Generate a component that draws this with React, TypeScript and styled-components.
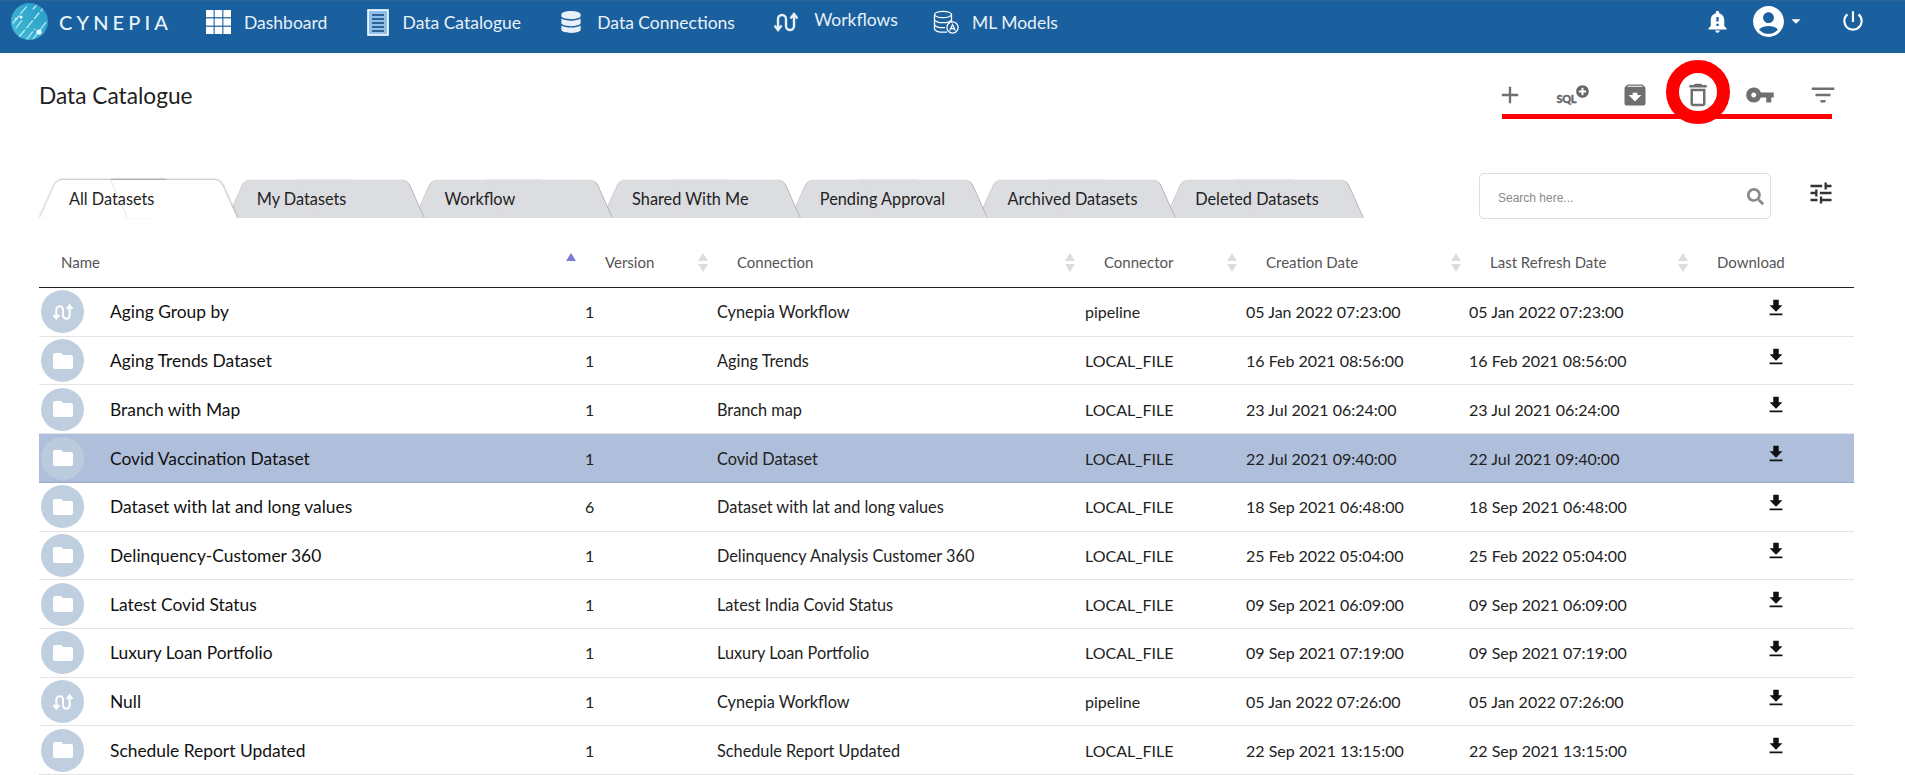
import React from "react";
import styled, { createGlobalStyle } from "styled-components";
import {
  MdAccountCircle,
  MdAdd,
  MdArchive,
  MdArrowDropDown,
  MdDeleteOutline,
  MdFileDownload,
  MdFilterList,
  MdFolder,
  MdNotificationImportant,
  MdPowerSettingsNew,
  MdTune,
  MdVpnKey,
} from "react-icons/md";
import { FaDatabase, FaSearch, FaPlusCircle } from "react-icons/fa";

const GlobalStyle = createGlobalStyle`
  html, body {
    margin: 0;
    padding: 0;
    height: 775px;
    overflow: hidden;
    background: #fff;
    font-family: Lato, "Open Sans", sans-serif;
    color: #111;
  }
`;

const Navbar = styled.header`
  height: 53px;
  box-sizing: border-box;
  background: #1a5f9e;
  border-top: 1px solid #2a6496;
  display: flex;
  align-items: flex-start;
  color: #e8f1f8;
`;

const Brand = styled.div`
  display: flex;
  align-items: center;
  gap: 11px;
  margin: 2px 0 0 11px;
  width: 195px;
`;

const BrandName = styled.span`
  font-size: 20px;
  letter-spacing: 4.1px;
  color: #e6f4fa;
  font-weight: 500;
`;

const NavList = styled.nav`
  display: flex;
  gap: 39.2px;
  align-items: flex-start;
`;

const NavItem = styled.a<{ $gap: number; $raised?: boolean; $pull?: number }>`
  display: flex;
  align-items: center;
  gap: ${(p) => p.$gap}px;
  height: 42px;
  margin-left: ${(p) => p.$pull ?? 0}px;
  font-size: 17.5px;
  color: #e8f1f8;
  span {
    position: relative;
    top: ${(p) => (p.$raised ? -3 : 0)}px;
  }
`;

const NavRight = styled.div`
  margin-left: auto;
  display: flex;
  align-items: center;
  height: 40px;
  padding-right: 39px;
  color: #fff;
`;

const UserMenu = styled.div`
  display: flex;
  align-items: center;
  margin: 0 33px 0 19px;
`;

const Main = styled.main`
  padding: 0 51px 0 39px;
`;

const TitleRow = styled.div`
  display: flex;
  justify-content: space-between;
  align-items: center;
  height: 46px;
  margin-top: 20px;
`;

const Title = styled.h1`
  margin: 0 0 2px;
  font-size: 22.7px;
  font-weight: 400;
  color: #222;
`;

const Actions = styled.div`
  position: relative;
  display: flex;
  height: 46px;
`;

const ActionButton = styled.div`
  position: relative;
  z-index: 2;
  width: 62.5px;
  display: flex;
  align-items: center;
  justify-content: center;
  color: #6f6f6f;
  height: 44px;
`;

const SqlIcon = styled.div`
  display: flex;
  align-items: flex-start;
  color: #666;
  span {
    font-size: 11px;
    font-weight: 900;
    margin-top: 7px;
    letter-spacing: -0.4px;
    -webkit-text-stroke: 0.3px #666;
  }
`;

const RedLine = styled.div`
  position: absolute;
  left: 23px;
  width: 330px;
  top: 41px;
  height: 5px;
  background: #ff0000;
`;

const RedRing = styled.div`
  position: absolute;
  z-index: 1;
  left: 187px;
  top: -13px;
  width: 64px;
  height: 64px;
  box-sizing: border-box;
  border: 13.5px solid #ff0000;
  border-radius: 50%;
  background: #fff;
`;

const TabRow = styled.div`
  display: flex;
  justify-content: space-between;
  align-items: flex-start;
  margin-top: 54px;
  height: 46px;
`;

const TabStrip = styled.div`
  display: flex;
  padding-top: 7px;
`;

const Tab = styled.div<{ $active?: boolean; $index: number }>`
  position: relative;
  z-index: ${(p) => (p.$active ? 20 : 10 - p.$index)};
  width: 199px;
  height: 38px;
  margin-right: -11.3px;
  box-sizing: border-box;
  padding-left: 30px;
  line-height: 38px;
  font-size: 16.3px;
  color: #222;
  &::before,
  &::after {
    content: "";
    position: absolute;
    top: 0;
    bottom: 0;
    width: 55%;
    z-index: -1;
    background: ${(p) => (p.$active ? "#fff" : "#dcdde0")};
    box-shadow: ${(p) =>
      p.$active ? "0 -1px 2px rgba(0,0,0,.25)" : "0 -1px 1px rgba(0,0,0,.05)"};
  }
  &::before {
    left: 0;
    border-top-left-radius: 6px;
    transform-origin: bottom left;
    transform: skewX(-24deg);
    border-left: 1px solid ${(p) => (p.$active ? "#ddd" : "#c8c9cc")};
  }
  &::after {
    right: 0;
    border-top-right-radius: 6px;
    transform-origin: bottom right;
    transform: skewX(24deg);
    border-right: 1.5px solid ${(p) => (p.$active ? "#c4c4c4" : "#a9aaad")};
  }
`;

const ToolRight = styled.div`
  display: flex;
  align-items: flex-start;
`;

const SearchBox = styled.div`
  width: 292px;
  height: 46px;
  box-sizing: border-box;
  border: 1px solid #ddd;
  border-radius: 5px;
  display: flex;
  align-items: center;
  justify-content: space-between;
  padding: 3px 6px 0 18px;
  color: #8a8a8a;
  font-family: "Liberation Sans", Arial, sans-serif;
  font-size: 12px;
`;

const SearchGlyph = styled(FaSearch)`
  margin-top: -3px;
`;

const TuneButton = styled.div`
  width: 83px;
  display: flex;
  justify-content: flex-end;
  padding: 6px 19px 0 0;
  box-sizing: border-box;
  color: #333;
`;

const HeaderRow = styled.div`
  display: grid;
  grid-template-columns: 556px 132px 367px 162px 224px 227px 147px;
  height: 48px;
  margin-top: 21px;
  border-bottom: 1.5px solid #222;
  box-sizing: border-box;
  align-items: center;
`;

const HeaderCell = styled.div<{ $pad?: number }>`
  display: flex;
  justify-content: space-between;
  align-items: center;
  padding: 0 19px 3px ${(p) => p.$pad ?? 10}px;
  font-size: 15px;
  color: #555;
`;

const SortIcon = styled.span`
  width: 10px;
  display: flex;
  flex-direction: column;
  gap: 3px;
`;

const Arrow = styled.i<{ $down?: boolean; $on?: boolean }>`
  display: block;
  width: 0;
  height: 0;
  border-left: 5px solid transparent;
  border-right: 5px solid transparent;
  ${(p) =>
    p.$down
      ? "border-top: 8px solid #ddd;"
      : `border-bottom: 8px solid ${p.$on ? "#7c7ccf" : "#ddd"};`}
`;

const SortedIcon = styled(SortIcon)`
  position: relative;
  top: -5px;
`;

const Row = styled.div<{ $selected?: boolean }>`
  display: grid;
  grid-template-columns: 501px 177px 368px 161px 223px 231px 154px;
  height: 48.72px;
  box-sizing: border-box;
  align-items: center;
  border-bottom: 1.5px solid ${(p) => (p.$selected ? "#98a7c2" : "#e4e4e4")};
  background: ${(p) => (p.$selected ? "#afbfdb" : "transparent")};
  font-size: 16px;
  color: #222;
`;

const NameCell = styled.div`
  display: flex;
  align-items: center;
  gap: 26px;
  padding-left: 2px;
  font-size: 17.4px;
  color: #111;
`;

const Avatar = styled.div<{ $selected?: boolean }>`
  width: 43px;
  height: 43px;
  border-radius: 50%;
  background: ${(p) => (p.$selected ? "#bccade" : "#bfcfdf")};
  color: #fff;
  display: flex;
  align-items: center;
  justify-content: center;
`;

const VersionCell = styled.div`
  padding-left: 45px;
`;

const ConnectionCell = styled.div`
  font-size: 16.3px;
`;

const DownloadCell = styled.div`
  display: flex;
  justify-content: center;
  color: #111;
  padding: 0 2px 8px 0;
`;

const Logo = () => (
  <svg width="37" height="37" viewBox="0 0 37 37">
    <defs>
      <linearGradient id="logoFill" x1="0" y1="1" x2="1" y2="0">
        <stop offset="0" stopColor="#43bcd6" />
        <stop offset="1" stopColor="#2a9ac6" />
      </linearGradient>
      <clipPath id="logoClip">
        <circle cx="18.5" cy="18.5" r="18.5" />
      </clipPath>
    </defs>
    <circle cx="18.5" cy="18.5" r="18.5" fill="url(#logoFill)" />
    <g clipPath="url(#logoClip)" stroke="#bff0f6" strokeWidth="1.2" strokeLinecap="round" strokeDasharray="9 3">
      <path d="M2 20 L16 3" />
      <path d="M5 25 L12 16" />
      <path d="M8 34 L28 10" />
      <path d="M16 36 L24 26" />
      <path d="M22 36 L36 18" />
      <path d="M22 6 L25 3" />
      <path d="M30 8 L33 4" />
    </g>
    <circle cx="28" cy="29" r="2.6" fill="#eafcff" />
    <circle cx="10" cy="14" r="1.5" fill="#eafcff" />
    <circle cx="5" cy="16" r="1.1" fill="#eafcff" />
  </svg>
);

const GridIcon = () => (
  <svg width="25" height="24" viewBox="0 0 25 24" fill="#fff">
    {[0, 8.7, 17.4].map((x) =>
      [0, 8.4, 16.8].map((y) => (
        <rect key={`${x}-${y}`} x={x} y={y} width="7.6" height="7.2" />
      ))
    )}
  </svg>
);

const CatalogueIcon = () => (
  <svg width="22" height="27" viewBox="0 0 22 27">
    <rect x="1" y="1" width="20" height="25" fill="#8dc0ea" stroke="#fff" strokeWidth="1.6" />
    <path d="M5 6h12M5 10h12M5 14h12M5 18h12M5 22h12" stroke="#10457a" strokeWidth="1.5" />
  </svg>
);

const WorkflowGlyph = ({ size, width }: { size: number; width: number }) => (
  <svg width={size} height={size} viewBox="0 0 24 24" fill="none" stroke="currentColor" strokeWidth={width}>
    <path d="M4 19V9a4 4 0 0 1 8 0v7a4 4 0 0 0 8 0V5" />
    <path d="M0.5 15.5L4 20l3.5-4.5M16.5 8.5L20 4l3.5 4.5" />
  </svg>
);

const ModelsIcon = () => (
  <svg width="26" height="24" viewBox="0 0 26 24" fill="none" stroke="#fff" strokeWidth="1.3">
    <ellipse cx="10" cy="4.5" rx="8.5" ry="3.2" />
    <path d="M1.5 4.5V19c0 1.8 4 3.2 8.5 3.2h4M18.5 4.5V12M1.5 9.5c0 1.8 4 3.2 8.5 3.2s8.5-1.4 8.5-3.2M1.5 14.5c0 1.8 4 3.2 8.5 3.2h2" />
    <circle cx="19.5" cy="17.5" r="5.6" fill="#1a5f9e" />
    <path d="M16.8 20.5l2.7-6 2.7 6M17.8 18.6h3.4" />
  </svg>
);

type Dataset = {
  name: string;
  version: number;
  connection: string;
  connector: string;
  created: string;
  refreshed: string;
  workflow?: boolean;
  selected?: boolean;
};

const datasets: Dataset[] = [
  { name: "Aging Group by", version: 1, connection: "Cynepia Workflow", connector: "pipeline", created: "05 Jan 2022 07:23:00", refreshed: "05 Jan 2022 07:23:00", workflow: true },
  { name: "Aging Trends Dataset", version: 1, connection: "Aging Trends", connector: "LOCAL_FILE", created: "16 Feb 2021 08:56:00", refreshed: "16 Feb 2021 08:56:00" },
  { name: "Branch with Map", version: 1, connection: "Branch map", connector: "LOCAL_FILE", created: "23 Jul 2021 06:24:00", refreshed: "23 Jul 2021 06:24:00" },
  { name: "Covid Vaccination Dataset", version: 1, connection: "Covid Dataset", connector: "LOCAL_FILE", created: "22 Jul 2021 09:40:00", refreshed: "22 Jul 2021 09:40:00", selected: true },
  { name: "Dataset with lat and long values", version: 6, connection: "Dataset with lat and long values", connector: "LOCAL_FILE", created: "18 Sep 2021 06:48:00", refreshed: "18 Sep 2021 06:48:00" },
  { name: "Delinquency-Customer 360", version: 1, connection: "Delinquency Analysis Customer 360", connector: "LOCAL_FILE", created: "25 Feb 2022 05:04:00", refreshed: "25 Feb 2022 05:04:00" },
  { name: "Latest Covid Status", version: 1, connection: "Latest India Covid Status", connector: "LOCAL_FILE", created: "09 Sep 2021 06:09:00", refreshed: "09 Sep 2021 06:09:00" },
  { name: "Luxury Loan Portfolio", version: 1, connection: "Luxury Loan Portfolio", connector: "LOCAL_FILE", created: "09 Sep 2021 07:19:00", refreshed: "09 Sep 2021 07:19:00" },
  { name: "Null", version: 1, connection: "Cynepia Workflow", connector: "pipeline", created: "05 Jan 2022 07:26:00", refreshed: "05 Jan 2022 07:26:00", workflow: true },
  { name: "Schedule Report Updated", version: 1, connection: "Schedule Report Updated", connector: "LOCAL_FILE", created: "22 Sep 2021 13:15:00", refreshed: "22 Sep 2021 13:15:00" },
];

const tabs = [
  "All Datasets",
  "My Datasets",
  "Workflow",
  "Shared With Me",
  "Pending Approval",
  "Archived Datasets",
  "Deleted Datasets",
];

const columns = ["Version", "Connection", "Connector", "Creation Date", "Last Refresh Date"];

export default function App() {
  return (
    <>
      <GlobalStyle />
      <Navbar>
        <Brand>
          <Logo />
          <BrandName>CYNEPIA</BrandName>
        </Brand>
        <NavList>
          <NavItem $gap={13}>
            <GridIcon />
            <span>Dashboard</span>
          </NavItem>
          <NavItem $gap={14}>
            <CatalogueIcon />
            <span>Data Catalogue</span>
          </NavItem>
          <NavItem $gap={15}>
            <FaDatabase size={22} />
            <span>Data Connections</span>
          </NavItem>
          <NavItem $gap={16} $raised>
            <WorkflowGlyph size={24} width={2.4} />
            <span>Workflows</span>
          </NavItem>
          <NavItem $gap={13} $pull={-4}>
            <ModelsIcon />
            <span>ML Models</span>
          </NavItem>
        </NavList>
        <NavRight>
          <MdNotificationImportant size={27} />
          <UserMenu>
            <MdAccountCircle size={37} />
            <MdArrowDropDown size={22} style={{ marginLeft: -2 }} />
          </UserMenu>
          <MdPowerSettingsNew size={26} />
        </NavRight>
      </Navbar>
      <Main>
        <TitleRow>
          <Title>Data Catalogue</Title>
          <Actions>
            <RedLine />
            <RedRing />
            <ActionButton>
              <MdAdd size={28} />
            </ActionButton>
            <ActionButton>
              <SqlIcon>
                <span>SQL</span>
                <FaPlusCircle size={13} />
              </SqlIcon>
            </ActionButton>
            <ActionButton>
              <MdArchive size={28} />
            </ActionButton>
            <ActionButton>
              <MdDeleteOutline size={30} />
            </ActionButton>
            <ActionButton>
              <MdVpnKey size={30} />
            </ActionButton>
            <ActionButton>
              <MdFilterList size={30} />
            </ActionButton>
          </Actions>
        </TitleRow>
        <TabRow>
          <TabStrip>
            {tabs.map((t, i) => (
              <Tab key={t} $index={i} $active={i === 0}>
                {t}
              </Tab>
            ))}
          </TabStrip>
          <ToolRight>
            <SearchBox>
              Search here...
              <SearchGlyph size={17} />
            </SearchBox>
            <TuneButton>
              <MdTune size={28} />
            </TuneButton>
          </ToolRight>
        </TabRow>
        <HeaderRow>
          <HeaderCell $pad={22}>
            Name
            <SortedIcon>
              <Arrow $on />
            </SortedIcon>
          </HeaderCell>
          {columns.map((c) => (
            <HeaderCell key={c}>
              {c}
              <SortIcon>
                <Arrow />
                <Arrow $down />
              </SortIcon>
            </HeaderCell>
          ))}
          <HeaderCell>Download</HeaderCell>
        </HeaderRow>
        {datasets.map((d) => (
          <Row key={d.name} $selected={d.selected}>
            <NameCell>
              <Avatar $selected={d.selected}>
                {d.workflow ? <WorkflowGlyph size={20} width={2.4} /> : <MdFolder size={24} />}
              </Avatar>
              {d.name}
            </NameCell>
            <VersionCell>{d.version}</VersionCell>
            <ConnectionCell>{d.connection}</ConnectionCell>
            <div>{d.connector}</div>
            <div>{d.created}</div>
            <div>{d.refreshed}</div>
            <DownloadCell>
              <MdFileDownload size={22} />
            </DownloadCell>
          </Row>
        ))}
      </Main>
    </>
  );
}
